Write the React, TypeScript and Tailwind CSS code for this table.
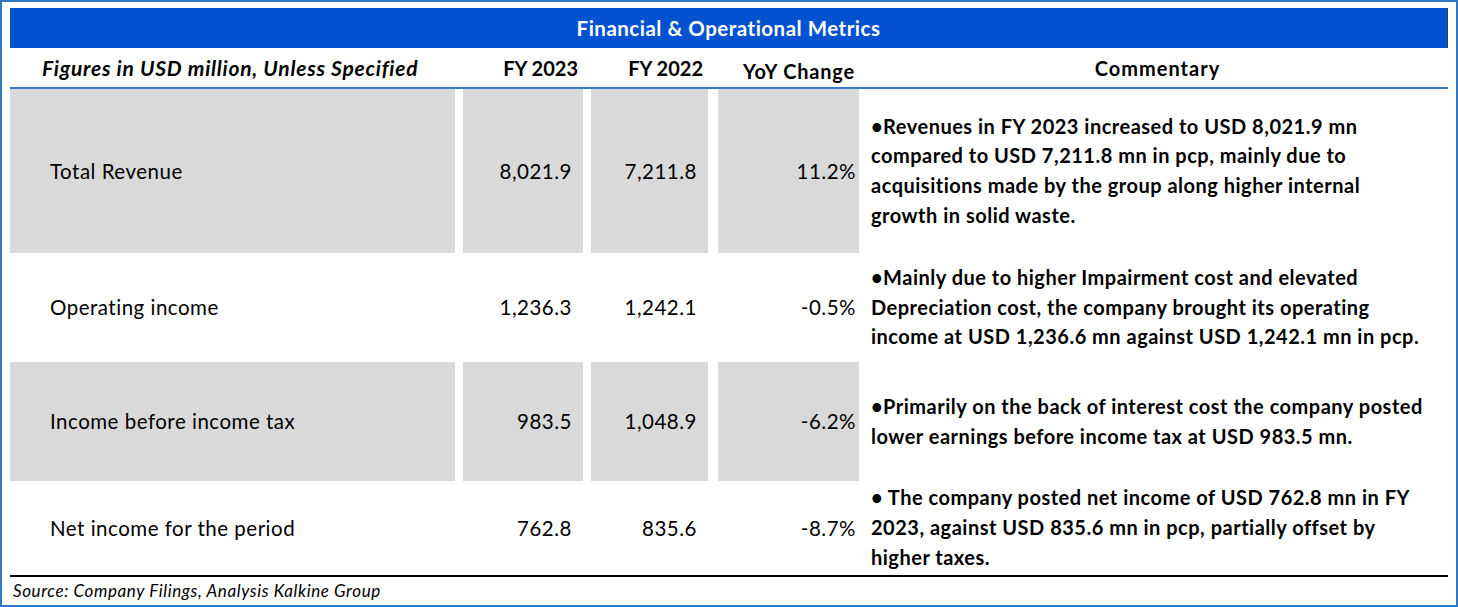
const rows = [
  {
    label: 'Total Revenue',
    fy23: '8,021.9',
    fy22: '7,211.8',
    yoy: '11.2%',
    gray: true,
    h: 'h-[164px]',
    notes: [
      '•Revenues in FY 2023 increased to USD 8,021.9 mn',
      'compared to USD 7,211.8 mn in pcp, mainly due to',
      'acquisitions made by the group along higher internal',
      'growth in solid waste.',
    ],
  },
  {
    label: 'Operating income',
    fy23: '1,236.3',
    fy22: '1,242.1',
    yoy: '-0.5%',
    gray: false,
    h: 'h-[109px]',
    notes: [
      '•Mainly due to higher Impairment cost and elevated',
      'Depreciation cost, the company brought its operating',
      'income at USD 1,236.6 mn against USD 1,242.1 mn in pcp.',
    ],
  },
  {
    label: 'Income before income tax',
    fy23: '983.5',
    fy22: '1,048.9',
    yoy: '-6.2%',
    gray: true,
    h: 'h-[119px]',
    notes: [
      '•Primarily on the back of interest cost the company posted',
      'lower earnings before income tax at USD 983.5 mn.',
    ],
  },
  {
    label: 'Net income for the period',
    fy23: '762.8',
    fy22: '835.6',
    yoy: '-8.7%',
    gray: false,
    h: 'h-[94px]',
    notes: [
      '• The company posted net income of USD 762.8 mn in FY',
      '2023, against USD 835.6 mn in pcp, partially offset by',
      'higher taxes.',
    ],
  },
];

export default function App() {
  return (
    <div
      className="h-[607px] w-[1458px] border-2 border-[#2f78c4] bg-white px-[8px] pt-[6px] text-black"
      style={{ fontFamily: 'Lato, "Open Sans", sans-serif' }}
    >
      <div className="flex h-[40px] items-center justify-center border-r border-[#34405a] bg-[#0452cf] text-[20.5px] font-bold tracking-[0.5px] text-white">
        Financial &amp; Operational Metrics
      </div>

      {/* header */}
      <div className="flex h-[41px] border-b-2 border-[#2e7bcf] text-[20px] font-bold">
        <div className="flex w-[445px] items-center pl-[32px] text-[21px] italic tracking-[0.75px]">
          Figures in USD million, Unless Specified
        </div>
        <div className="ml-[8px] flex w-[120px] items-center justify-end pr-[5px]">FY 2023</div>
        <div className="ml-[8px] flex w-[117px] items-center justify-end pr-[5px]">FY 2022</div>
        <div className="ml-[10px] flex w-[141px] items-center justify-end pr-[4px] pt-[6px] tracking-[0.8px]">
          YoY Change
        </div>
        <div className="flex flex-1 items-center justify-center pl-[8px] tracking-[1px]">
          Commentary
        </div>
      </div>

      {rows.map((r) => {
        const bg = r.gray ? 'bg-[#d9d9d9]' : 'bg-white';
        return (
          <div key={r.label} className={`flex ${r.h} text-[20.5px] tracking-[0.5px]`}>
            <div className={`flex w-[445px] items-center pl-[40px] ${bg}`}>{r.label}</div>
            <div className={`ml-[8px] flex w-[120px] items-center justify-end pr-[11px] ${bg}`}>
              {r.fy23}
            </div>
            <div className={`ml-[8px] flex w-[117px] items-center justify-end pr-[11px] ${bg}`}>
              {r.fy22}
            </div>
            <div className={`ml-[10px] flex w-[141px] items-center justify-end pr-[3px] ${bg}`}>
              {r.yoy}
            </div>
            <div className="flex flex-1 flex-col justify-center pl-[12px] text-[20px] font-bold leading-[29.7px]">
              {r.notes.map((n) => (
                <div key={n} className="whitespace-nowrap">
                  {n}
                </div>
              ))}
            </div>
          </div>
        );
      })}

      <div className="flex h-[30px] items-center border-t-2 border-black pl-[3px] text-[17px] italic tracking-[0.6px]">
        Source: Company Filings, Analysis Kalkine Group
      </div>
    </div>
  );
}
